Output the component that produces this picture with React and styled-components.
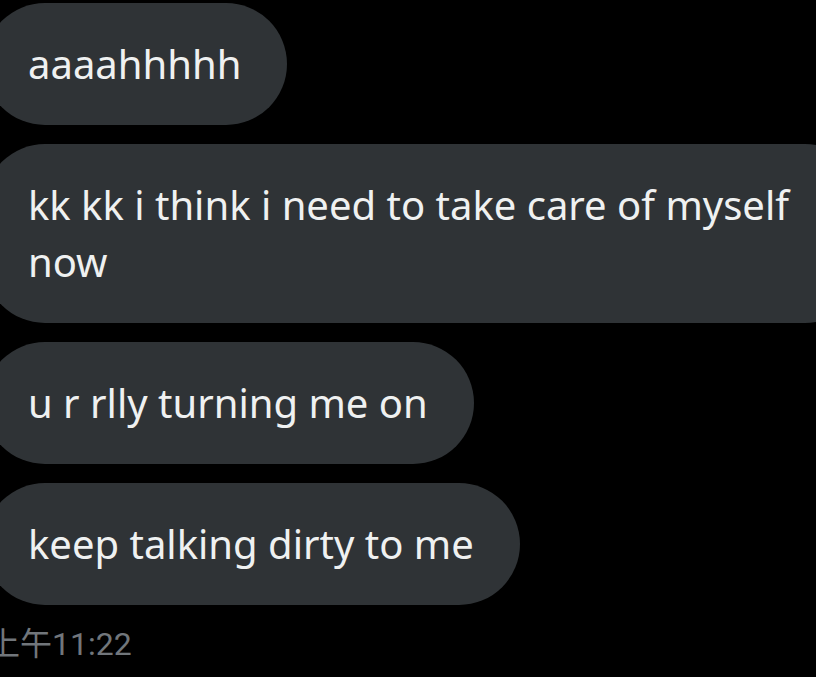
import React from 'react';
import styled, { createGlobalStyle } from 'styled-components';

const GlobalStyle = createGlobalStyle`
    html, body {
        margin: 0;
        padding: 0;
        background: #000000;
        overflow: hidden;
    }
`;

const Thread = styled.div`
    display: flex;
    flex-direction: column;
    align-items: flex-start;
    gap: 19px;
    padding-top: 3px;
    margin-left: -16px;
    width: 900px;
`;

const Bubble = styled.div`
    background: #2f3336;
    color: #eff1f1;
    font-family: "Noto Sans", "Open Sans", sans-serif;
    font-size: 40px;
    line-height: 57px;
    padding: 32px 46px 33px 44px;
    border-radius: 61px;
    max-width: 792px;
`;

const Stamp = styled.div`
    margin: 17px 0 0 -12px;
    color: #71767b;
    font-family: "Roboto", "Noto Sans CJK SC", sans-serif;
    font-size: 32px;
    line-height: 44px;
`;

const messages = [
    'aaaahhhhh',
    'kk kk i think i need to take care of myself now',
    'u r rlly turning me on',
    'keep talking dirty to me',
];

export default function App() {
    return (
        <>
            <GlobalStyle />
            <Thread>
                {messages.map((text) => (
                    <Bubble key={text}>{text}</Bubble>
                ))}
            </Thread>
            <Stamp>上午11:22</Stamp>
        </>
    );
}
